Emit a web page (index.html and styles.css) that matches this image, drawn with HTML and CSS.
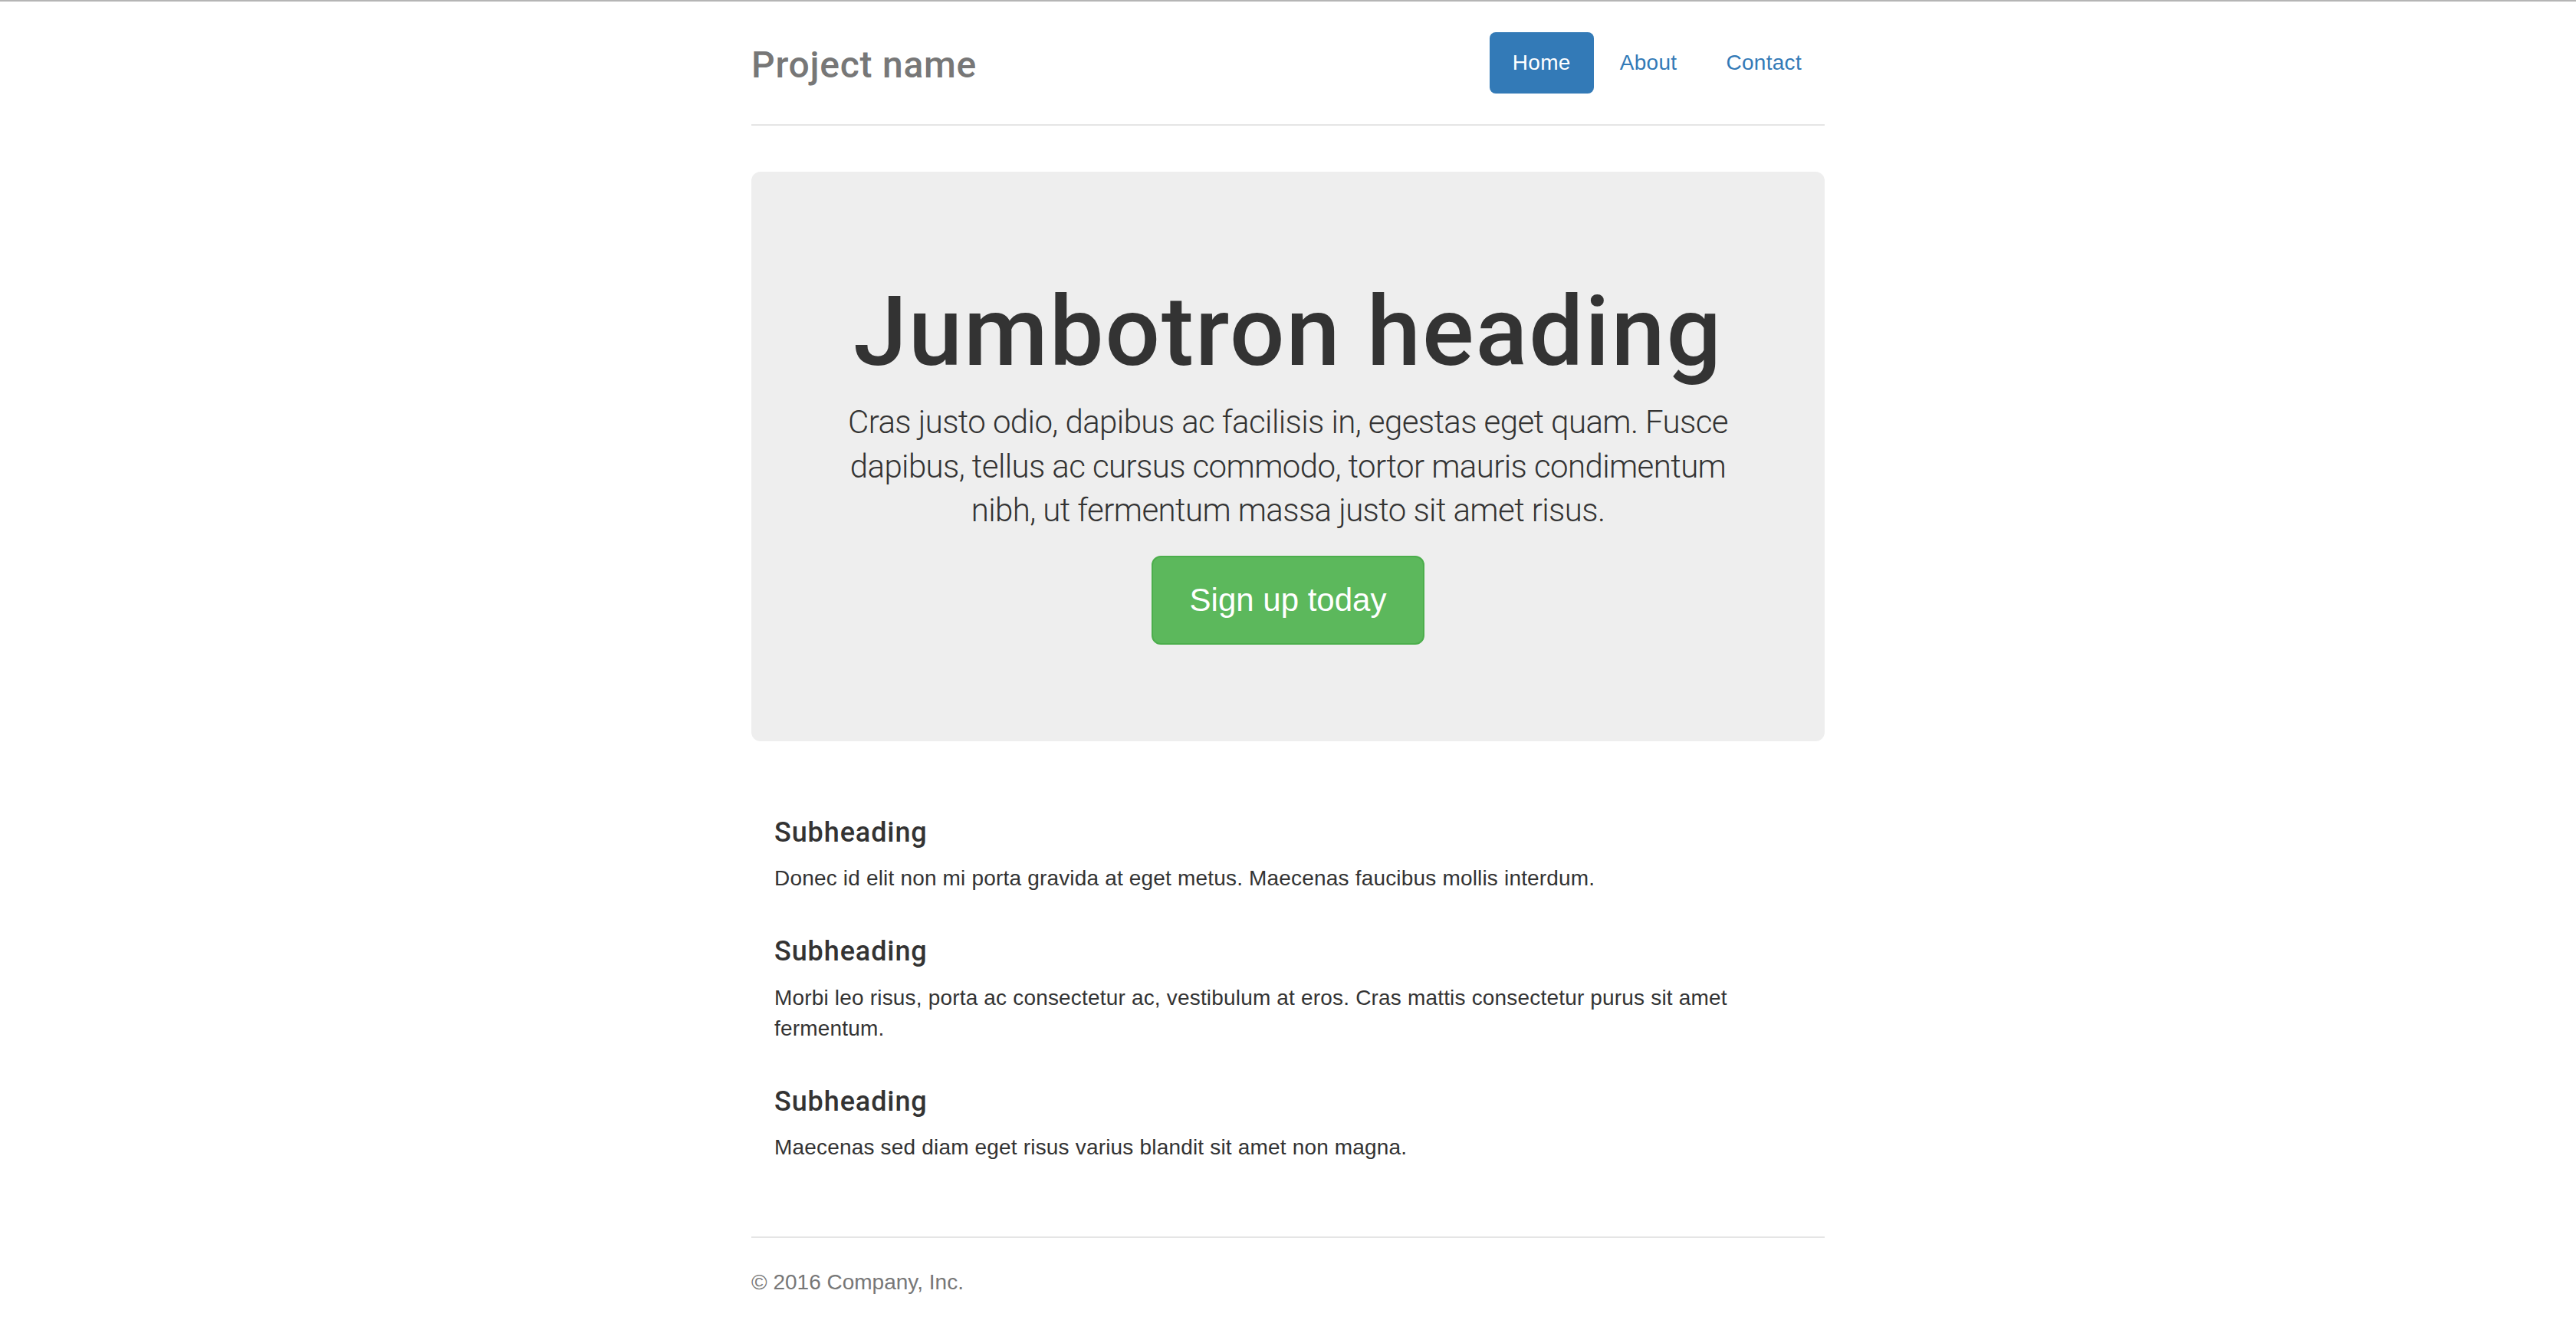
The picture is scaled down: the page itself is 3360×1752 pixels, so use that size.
FILE: index.html
```html
<!DOCTYPE html>
<html lang="en">
<head>
<meta charset="utf-8">
<title>Narrow Jumbotron</title>
<link rel="stylesheet" href="styles.css">
</head>
<body>
<div class="container">
  <div class="header">
    <h3 class="brand">Project name</h3>
    <nav>
      <ul class="nav-pills">
        <li class="active"><a href="#">Home</a></li>
        <li><a href="#">About</a></li>
        <li><a href="#">Contact</a></li>
      </ul>
    </nav>
  </div>

  <div class="jumbotron">
    <h1>Jumbotron heading</h1>
    <p class="lead">Cras justo odio, dapibus ac facilisis in, egestas eget quam. Fusce dapibus, tellus ac cursus commodo, tortor mauris condimentum nibh, ut fermentum massa justo sit amet risus.</p>
    <p class="cta"><a class="btn-success" href="#">Sign up today</a></p>
  </div>

  <div class="marketing">
    <h4>Subheading</h4>
    <p>Donec id elit non mi porta gravida at eget metus. Maecenas faucibus mollis interdum.</p>
    <h4>Subheading</h4>
    <p>Morbi leo risus, porta ac consectetur ac, vestibulum at eros. Cras mattis consectetur purus sit amet fermentum.</p>
    <h4>Subheading</h4>
    <p>Maecenas sed diam eget risus varius blandit sit amet non magna.</p>
  </div>

  <footer class="footer">
    <p>&copy; 2016 Company, Inc.</p>
  </footer>
</div>
</body>
</html>
```

FILE: styles.css
```css
* { box-sizing: border-box; }

html, body { margin: 0; padding: 0; }

body {
  border-top: 2px solid #b5b5b5;
  padding: 40px 0 40px;
  background: #fff;
  color: #333;
  font-family: "Liberation Sans", Arial, Helvetica, sans-serif;
  font-size: 28px;
  line-height: 40px;
}

.container {
  width: 1400px;
  margin: 0 auto;
}

a { text-decoration: none; }

/* Header */
.header {
  display: flex;
  justify-content: space-between;
  align-items: flex-start;
  padding-bottom: 40px;
  border-bottom: 2px solid #e5e5e5;
  margin-bottom: 60px;
}

.brand {
  margin: 0;
  padding-top: 6px;
  font-family: "Roboto", "Liberation Sans", Arial, sans-serif;
  font-weight: 500;
  font-size: 48px;
  line-height: 74px;
  letter-spacing: 0.75px;
  color: #777;
}

.nav-pills {
  display: flex;
  gap: 4px;
  list-style: none;
  margin: 0;
  padding: 0;
}

.nav-pills a {
  display: block;
  padding: 20px 30px;
  line-height: 40px;
  font-size: 28px;
  letter-spacing: 0.3px;
  color: #337ab7;
  border-radius: 8px;
}

.nav-pills .active a {
  background: #337ab7;
  color: #fff;
}

/* Jumbotron */
.jumbotron {
  background: #eee;
  border-radius: 12px;
  padding: 96px 120px;
  text-align: center;
}

.jumbotron h1 {
  margin: 44px 0 20px;
  font-family: "Roboto", "Liberation Sans", Arial, sans-serif;
  font-weight: 500;
  font-size: 126px;
  line-height: 138px;
  letter-spacing: 2px;
  color: #333;
}

.lead {
  margin: 0 0 30px;
  font-family: "Roboto", "Liberation Sans", Arial, sans-serif;
  font-weight: 300;
  font-size: 42px;
  line-height: 57.5px;
  letter-spacing: -0.6px;
}

.cta {
  margin: 0 0 30px;
  line-height: 57.5px;
}

.btn-success {
  display: inline-block;
  padding: 28px 48px;
  font-size: 42px;
  line-height: 56px;
  color: #fff;
  background: #5cb85c;
  border: 2px solid #4cae4c;
  border-radius: 12px;
  vertical-align: middle;
}

/* Marketing */
.marketing {
  display: flow-root;
  margin: 80px 0 76px;
  padding: 0 30px;
}

.marketing h4 {
  margin: 20px 0 20px;
  font-family: "Roboto", "Liberation Sans", Arial, sans-serif;
  font-weight: 500;
  font-size: 36px;
  line-height: 39.6px;
  letter-spacing: 0.9px;
}

.marketing p {
  margin: 0 0 20px;
  letter-spacing: 0.18px;
}

.marketing p + h4 {
  margin-top: 56px;
}

/* Footer */
.footer {
  padding-top: 38px;
  border-top: 2px solid #e5e5e5;
  color: #777;
}

.footer p {
  margin: 0 0 20px;
}
```
